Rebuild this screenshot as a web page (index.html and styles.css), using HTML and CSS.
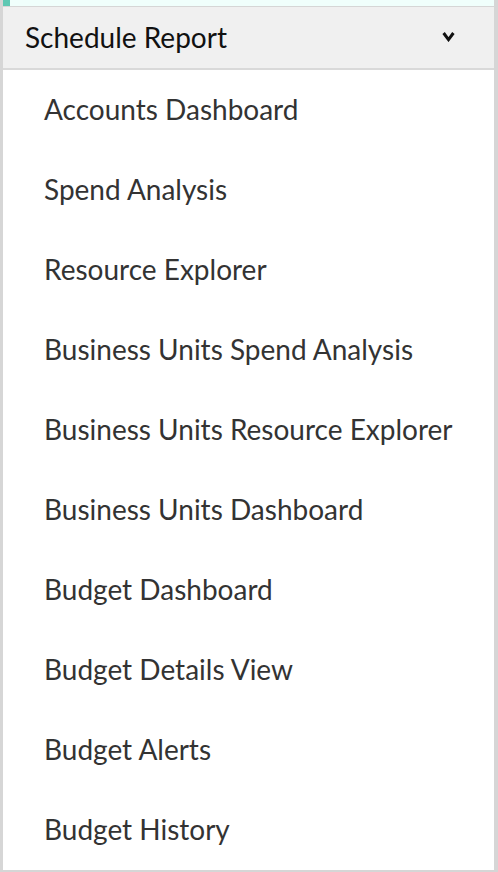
FILE: index.html
```html
<!DOCTYPE html>
<html>
<head>
<meta charset="utf-8">
<link rel="stylesheet" href="styles.css">
</head>
<body>
<div class="panel">
  <div class="topstrip"><span class="accent"></span></div>
  <div class="header">
    <span class="title">Schedule Report</span>
    <svg class="chev" width="13" height="11" viewBox="0 0 13 11"><polyline points="1.6,2 6.5,8.6 11.4,2" fill="none" stroke="#111" stroke-width="3"/></svg>
  </div>
  <ul class="list">
    <li>Accounts Dashboard</li>
    <li>Spend Analysis</li>
    <li>Resource Explorer</li>
    <li>Business Units Spend Analysis</li>
    <li>Business Units Resource Explorer</li>
    <li>Business Units Dashboard</li>
    <li>Budget Dashboard</li>
    <li>Budget Details View</li>
    <li>Budget Alerts</li>
    <li>Budget History</li>
  </ul>
</div>
</body>
</html>
```

FILE: styles.css
```css
html, body {
  margin: 0;
  padding: 0;
  background: #fff;
}
.panel {
  width: 498px;
  height: 872px;
  box-sizing: border-box;
  border-left: 3px solid #d6d6d6;
  border-right: 4px solid #d6d6d6;
  border-bottom: 2px solid #d6d6d6;
  font-family: Lato, "Noto Sans", sans-serif;
  display: flex;
  flex-direction: column;
}
.topstrip {
  height: 6px;
  flex: none;
  background: #f0fffc;
  border-bottom: 1px solid #d6d6d6;
  display: flex;
}
.accent {
  width: 7px;
  height: 6px;
  background: #5fc8b3;
}
.header {
  height: 63px;
  flex: none;
  box-sizing: border-box;
  background: #f0f0f0;
  border-bottom: 2px solid #d9d9d9;
  display: flex;
  align-items: center;
  justify-content: space-between;
  padding: 0 39px 2px 22px;
}
.title {
  font-size: 28px;
  color: #111;
  line-height: 1;
}
.chev {
  display: block;
  margin-top: -1px;
}
.list {
  list-style: none;
  margin: 0;
  padding: 0;
  flex: 1;
}
.list li {
  height: 80px;
  box-sizing: border-box;
  display: flex;
  align-items: center;
  padding: 0 0 2px 41px;
  font-size: 28px;
  color: #333;
}
```
